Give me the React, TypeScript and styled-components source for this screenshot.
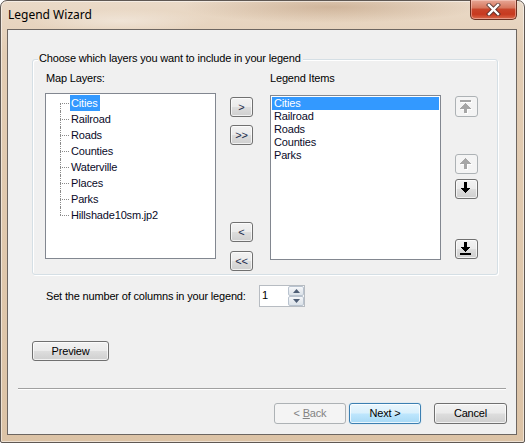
import React from "react";
import styled, { createGlobalStyle, css } from "styled-components";

const GlobalStyle = createGlobalStyle`
  html, body { margin: 0; padding: 0; background: #ffffff; }
  body {
    font-family: "Liberation Sans", Arial, sans-serif;
    font-size: 11px;
    letter-spacing: -0.17px;
    color: #000;
  }
  * { box-sizing: border-box; }
`;

const Window = styled.div`
  width: 525px;
  height: 443px;
  display: flex;
  flex-direction: column;
  border: 1px solid #5f5853;
  border-radius: 7px 7px 2px 2px;
  padding: 0 7px 7px 6px;
  background:
    radial-gradient(ellipse 150px 16px at 330px 6px, rgba(160, 115, 75, 0.35), transparent),
    radial-gradient(ellipse 90px 12px at 120px 20px, rgba(255, 255, 255, 0.35), transparent),
    linear-gradient(180deg, #eadac8 0%, #e3cdb4 12%, #dcc3a6 100%);
  box-shadow: inset 0 0 0 1px rgba(255, 255, 255, 0.5);
`;

const TitleBar = styled.div`
  height: 28px;
  display: flex;
  align-items: flex-start;
`;

const Title = styled.div`
  font-family: "Noto Sans", "Open Sans", sans-serif;
  font-size: 12px;
  letter-spacing: 0;
  line-height: 16px;
  margin: 6px 0 0 1px;
  color: #000;
`;

const CloseButton = styled.div`
  margin: -1px 0 0 auto;
  width: 47px;
  height: 20px;
  border: 1px solid #6a3123;
  border-top: none;
  border-radius: 0 0 5px 5px;
  background: linear-gradient(180deg, #e7a796 0%, #d7785f 40%, #c8442a 50%, #c7391f 75%, #d96a4c 100%);
  box-shadow: inset 0 0 0 1px rgba(255, 220, 210, 0.45);
  display: flex;
  align-items: center;
  justify-content: center;
`;

const Client = styled.div`
  flex: 1;
  display: flex;
  flex-direction: column;
  background: #f0f0f0;
  border: 1px solid #6d6661;
  padding: 0 10px;
`;

const GroupBox = styled.div`
  position: relative;
  margin: 29px 8px 0 14px;
  height: 216px;
  border: 1px solid #d5dfe5;
  border-radius: 3px;
  box-shadow: inset 1px 1px 0 #ffffff, 1px 1px 0 #ffffff;
  padding: 12px 0 0 12px;
  display: flex;
`;

const GroupTitle = styled.div`
  position: absolute;
  top: -8px;
  left: 5px;
  padding: 0 2px 0 1px;
  background: #f0f0f0;
  line-height: 13px;
`;

const Column = styled.div<{ $ml?: number; $w: number }>`
  display: flex;
  flex-direction: column;
  width: ${(p) => p.$w}px;
  margin-left: ${(p) => p.$ml ?? 0}px;
`;

const Label = styled.div<{ $mb: number; $pl?: number }>`
  line-height: 13px;
  height: 13px;
  margin-bottom: ${(p) => p.$mb}px;
  padding-left: ${(p) => p.$pl ?? 0}px;
  white-space: nowrap;
`;

const ListBox = styled.div<{ $h: number }>`
  height: ${(p) => p.$h}px;
  background: #ffffff;
  border: 1px solid #828790;
  padding: 1px 1px;
`;

const TreeRow = styled.div<{ $first?: boolean; $last?: boolean }>`
  position: relative;
  height: 16px;
  padding-left: 23px;
  display: flex;
  align-items: stretch;
  &::before {
    content: "";
    position: absolute;
    left: 13px;
    top: 8px;
    width: 9px;
    border-top: 1px dotted #8a8a8a;
  }
  &::after {
    content: "";
    position: absolute;
    left: 13px;
    top: ${(p) => (p.$first ? 8 : 0)}px;
    height: ${(p) => (p.$first || p.$last ? 8 : 16)}px;
    border-left: 1px dotted #8a8a8a;
  }
`;

const TreeText = styled.span<{ $sel?: boolean }>`
  line-height: 16px;
  padding: 0 2px 0 1px;
  color: #0a0a28;
  ${(p) =>
    p.$sel &&
    css`
      background: #3399ff;
      color: #ffffff;
    `}
`;

const ListItem = styled.div<{ $sel?: boolean }>`
  height: 13px;
  line-height: 13px;
  padding-left: 2px;
  color: #0a0a28;
  ${(p) =>
    p.$sel &&
    css`
      background: #3399ff;
      color: #ffffff;
    `}
`;

const ButtonColumn = styled.div<{ $ml: number; $pt: number; $pb: number }>`
  width: 23px;
  margin-left: ${(p) => p.$ml}px;
  padding-top: ${(p) => p.$pt}px;
  padding-bottom: ${(p) => p.$pb}px;
  display: flex;
  flex-direction: column;
  justify-content: space-between;
`;

const ButtonGroup = styled.div<{ $gap: number }>`
  display: flex;
  flex-direction: column;
  gap: ${(p) => p.$gap}px;
`;

const IconColumn = styled.div`
  width: 23px;
  margin-left: 14px;
  padding-top: 24px;
  display: flex;
  flex-direction: column;
`;

type Variant = "normal" | "default" | "disabled";

const PushButton = styled.div<{ $w: number; $h: number; $v?: Variant; $mt?: number }>`
  width: ${(p) => p.$w}px;
  height: ${(p) => p.$h}px;
  margin-top: ${(p) => p.$mt ?? 0}px;
  flex-shrink: 0;
  display: flex;
  align-items: center;
  justify-content: center;
  border-radius: 3px;
  font-size: 11px;
  color: #000;
  border: 1px solid #707070;
  background: linear-gradient(180deg, #f2f2f2 0%, #ebebeb 48%, #dddddd 52%, #cfcfcf 100%);
  box-shadow: inset 0 0 0 1px rgba(255, 255, 255, 0.7);
  ${(p) =>
    p.$v === "disabled" &&
    css`
      border-color: #adb2b5;
      background: #f4f4f4;
      color: #838383;
      box-shadow: none;
    `}
  ${(p) =>
    p.$v === "default" &&
    css`
      border-color: #3c7fb1;
      background: linear-gradient(180deg, #eaf6fd 0%, #d9f0fc 48%, #bee6fd 52%, #a7d9f5 100%);
      box-shadow: inset 0 0 0 1px rgba(255, 255, 255, 0.75), 0 0 1px #6fc4f5;
    `}
`;

const ButtonText = styled.span`
  line-height: 13px;
  white-space: pre;
`;

const Glyph = styled.span`
  line-height: 13px;
  color: #1b2a4a;
`;

const OptionRow = styled.div`
  margin: 10px 0 0 28px;
  height: 22px;
  display: flex;
  align-items: center;
`;

const OptionLabel = styled.span`
  width: 213px;
  line-height: 13px;
`;

const SpinBox = styled.div`
  width: 46px;
  height: 22px;
  display: flex;
  border: 1px solid #b7bcc2;
  background: #ffffff;
`;

const SpinText = styled.div`
  flex: 1;
  padding: 3px 0 0 2px;
  line-height: 13px;
`;

const SpinButtons = styled.div`
  width: 16px;
  display: flex;
  flex-direction: column;
`;

const SpinPart = styled.div`
  flex: 1;
  display: flex;
  align-items: center;
  justify-content: center;
  border: 1px solid #b9c3cf;
  border-radius: 2px;
  background: linear-gradient(180deg, #f7f9fb 0%, #e7ebf0 50%, #dce3ea 100%);
`;

const PreviewRow = styled.div`
  margin: 34px 0 0 14px;
  display: flex;
`;

const Separator = styled.div`
  margin-top: 27px;
  height: 2px;
  border-top: 1px solid #a0a0a0;
  border-bottom: 1px solid #ffffff;
`;

const FooterRow = styled.div`
  margin: 13px -1px 0 0;
  display: flex;
  justify-content: flex-end;
  gap: 3px;
`;

const FooterSpacer = styled.div`
  width: 7px;
`;

type ArrowKind = "top" | "up" | "down" | "bottom";

const arrowShapes: Record<ArrowKind, { poly: string; bar?: [number, number] }> = {
  top: { poly: "5.5,3 11,8.5 7,8.5 7,13 4,13 4,8.5 0,8.5", bar: [0, 2] },
  up: { poly: "5.5,1 11,6.5 7,6.5 7,12 4,12 4,6.5 0,6.5" },
  down: { poly: "4,0 7,0 7,5.5 11,5.5 5.5,11 0,5.5 4,5.5" },
  bottom: { poly: "4,0 7,0 7,4.5 11,4.5 5.5,10 0,4.5 4,4.5", bar: [11, 2] },
};

const ArrowIcon: React.FC<{ kind: ArrowKind; disabled?: boolean }> = ({ kind, disabled }) => {
  const s = arrowShapes[kind];
  const shape = (fill: string, dx: number) => (
    <g transform={`translate(${dx},${dx})`} fill={fill}>
      <polygon points={s.poly} />
      {s.bar && <rect x={0} y={s.bar[0]} width={11} height={s.bar[1]} />}
    </g>
  );
  return (
    <svg width="13" height="14" viewBox="0 0 13 14" shapeRendering="crispEdges">
      {disabled ? (
        <>
          {shape("#ffffff", 1)}
          {shape("#a6a6a6", 0)}
        </>
      ) : (
        shape("#000000", 0)
      )}
    </svg>
  );
};

const layers = ["Cities", "Railroad", "Roads", "Counties", "Waterville", "Places", "Parks", "Hillshade10sm.jp2"];
const items = ["Cities", "Railroad", "Roads", "Counties", "Parks"];

export default function App() {
  return (
    <>
      <GlobalStyle />
      <Window>
        <TitleBar>
          <Title>Legend Wizard</Title>
          <CloseButton>
            <svg width="15" height="13" viewBox="0 0 15 13">
              <path d="M3 2 L12 11 M12 2 L3 11" stroke="#3b2a2a" strokeWidth="4.2" strokeLinecap="square" opacity="0.75" />
              <path d="M3 2 L12 11 M12 2 L3 11" stroke="#ffffff" strokeWidth="2.4" strokeLinecap="square" />
            </svg>
          </CloseButton>
        </TitleBar>
        <Client>
          <GroupBox>
            <GroupTitle>Choose which layers you want to include in your legend</GroupTitle>
            <Column $w={171}>
              <Label $mb={8} $pl={1}>Map Layers:</Label>
              <ListBox $h={166}>
                {layers.map((l, i) => (
                  <TreeRow key={l} $first={i === 0} $last={i === layers.length - 1}>
                    <TreeText $sel={i === 0}>{l}</TreeText>
                  </TreeRow>
                ))}
              </ListBox>
            </Column>
            <ButtonColumn $ml={14} $pt={25} $pb={3}>
              <ButtonGroup $gap={8}>
                <PushButton $w={23} $h={20}><Glyph>&gt;</Glyph></PushButton>
                <PushButton $w={23} $h={20}><Glyph>&gt;&gt;</Glyph></PushButton>
              </ButtonGroup>
              <ButtonGroup $gap={9}>
                <PushButton $w={23} $h={20}><Glyph>&lt;</Glyph></PushButton>
                <PushButton $w={23} $h={20}><Glyph>&lt;&lt;</Glyph></PushButton>
              </ButtonGroup>
            </ButtonColumn>
            <Column $w={171} $ml={17}>
              <Label $mb={10}>Legend Items</Label>
              <ListBox $h={165}>
                {items.map((it, i) => (
                  <ListItem key={it} $sel={i === 0}>{it}</ListItem>
                ))}
              </ListBox>
            </Column>
            <IconColumn>
              <PushButton $w={23} $h={21} $v="disabled"><ArrowIcon kind="top" disabled /></PushButton>
              <PushButton $w={23} $h={20} $v="disabled" $mt={37}><ArrowIcon kind="up" disabled /></PushButton>
              <PushButton $w={23} $h={20} $mt={5}><ArrowIcon kind="down" /></PushButton>
              <PushButton $w={23} $h={20} $mt={40}><ArrowIcon kind="bottom" /></PushButton>
            </IconColumn>
          </GroupBox>

          <OptionRow>
            <OptionLabel>Set the number of columns in your legend:</OptionLabel>
            <SpinBox>
              <SpinText>1</SpinText>
              <SpinButtons>
                <SpinPart>
                  <svg width="7" height="4" viewBox="0 0 7 4"><polygon points="3.5,0 7,4 0,4" fill="#4d5d75" /></svg>
                </SpinPart>
                <SpinPart>
                  <svg width="7" height="4" viewBox="0 0 7 4"><polygon points="0,0 7,0 3.5,4" fill="#4d5d75" /></svg>
                </SpinPart>
              </SpinButtons>
            </SpinBox>
          </OptionRow>

          <PreviewRow>
            <PushButton $w={77} $h={20}><ButtonText>Preview</ButtonText></PushButton>
          </PreviewRow>

          <Separator />

          <FooterRow>
            <PushButton $w={72} $h={21} $v="disabled"><ButtonText>&lt; <u>B</u>ack</ButtonText></PushButton>
            <PushButton $w={72} $h={21} $v="default"><ButtonText>Next &gt;</ButtonText></PushButton>
            <FooterSpacer />
            <PushButton $w={73} $h={21}><ButtonText>Cancel</ButtonText></PushButton>
          </FooterRow>
        </Client>
      </Window>
    </>
  );
}
